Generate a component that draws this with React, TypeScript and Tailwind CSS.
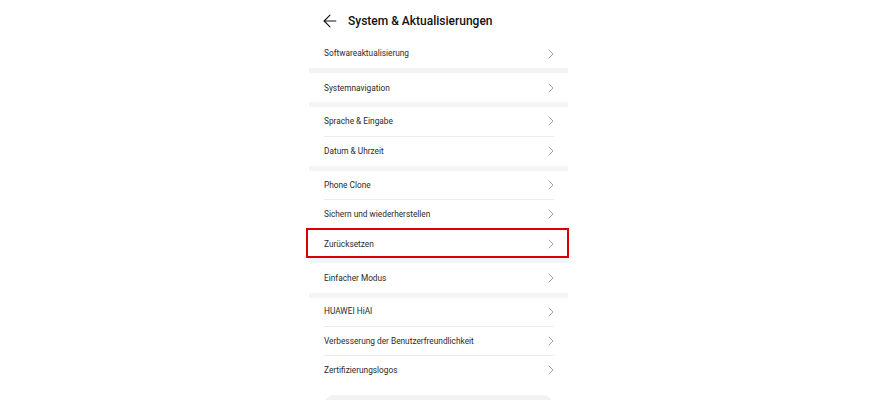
import { ArrowLeft, ChevronRight } from "lucide-react"

type Row = { label: string; marked?: boolean }

const sections: Row[][] = [
  [{ label: "Softwareaktualisierung" }],
  [{ label: "Systemnavigation" }],
  [{ label: "Sprache & Eingabe" }, { label: "Datum & Uhrzeit" }],
  [{ label: "Phone Clone" }, { label: "Sichern und wiederherstellen" }, { label: "Zurücksetzen", marked: true }],
  [{ label: "Einfacher Modus" }],
  [{ label: "HUAWEI HiAI" }, { label: "Verbesserung der Benutzerfreundlichkeit" }, { label: "Zertifizierungslogos" }],
]

function SettingRow({ row, last }: { row: Row; last: boolean }) {
  return (
    <div className="relative pl-[15px] pr-[14px]">
      <div className={`h-[29.2px] flex items-center justify-between ${last ? "" : "border-b border-[#ececec]"}`}>
        <span className="text-[8.3px] text-[#2a2a2a]">{row.label}</span>
        <ChevronRight className="w-[16px] h-[16px] -mr-[5px] text-[#9e9e9e]" strokeWidth={1.4} />
      </div>
      {row.marked && (
        <div className="absolute -left-[3px] -right-[1px] -top-[1px] bottom-0 border-2 border-[#d90000]" />
      )}
    </div>
  )
}

export default function App() {
  return (
    <div className="w-[879px] h-[400px] bg-white overflow-hidden" style={{ fontFamily: "Roboto, 'Liberation Sans', sans-serif" }}>
      <div className="ml-[309px] w-[259px]">
        <div className="h-[39px] flex items-center gap-[8px] pl-[11px] pt-[3px]">
          <ArrowLeft className="w-[20px] h-[20px] text-[#111]" strokeWidth={1.3} />
          <span className="text-[12px] font-medium text-[#111]">System &amp; Aktualisierungen</span>
        </div>
        {sections.map((rows, i) => (
          <div key={i}>
            {i > 0 && <div className="h-[5px] bg-[#f4f4f4]" />}
            {rows.map((row, j) => (
              <SettingRow key={row.label} row={row} last={j === rows.length - 1} />
            ))}
          </div>
        ))}
        <div className="mt-[10px] mx-[15px] h-[30px] rounded-[10px] bg-[#f2f2f2]" />
      </div>
    </div>
  )
}
